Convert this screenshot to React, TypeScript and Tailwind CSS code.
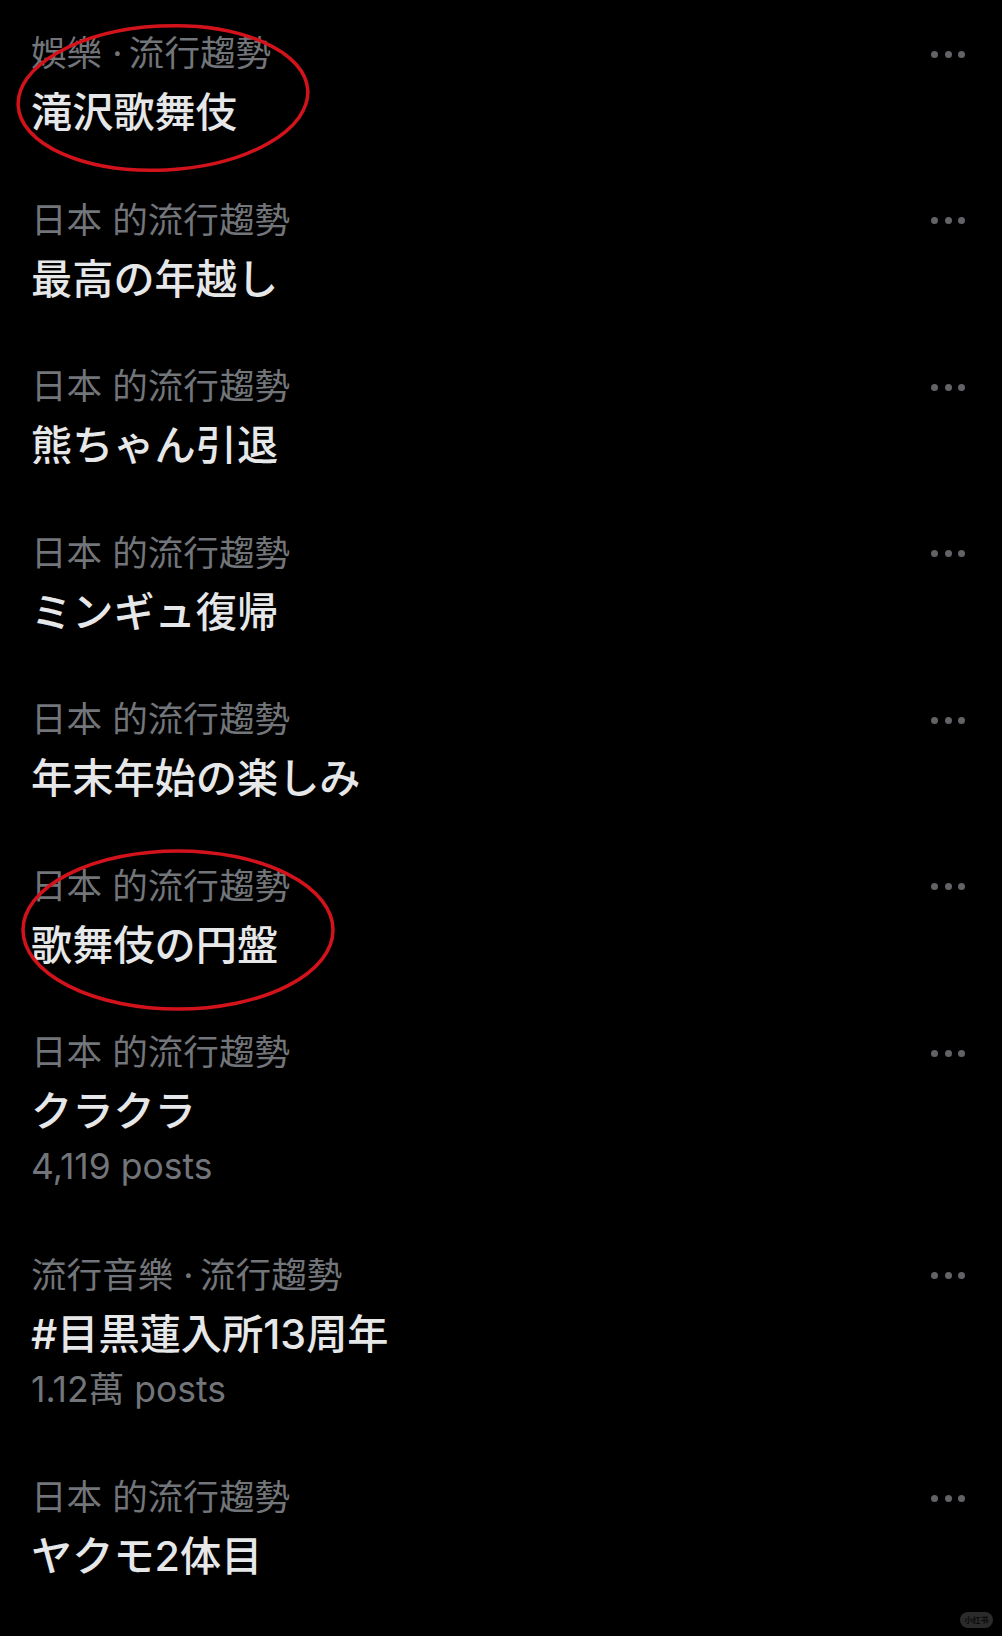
import React from "react";

type Trend = { cat: string; title: string; posts?: string };

const trends: Trend[] = [
  { cat: "娛樂 ·\u2009流行趨勢", title: "滝沢歌舞伎" },
  { cat: "日本 的流行趨勢", title: "最高の年越し" },
  { cat: "日本 的流行趨勢", title: "熊ちゃん引退" },
  { cat: "日本 的流行趨勢", title: "ミンギュ復帰" },
  { cat: "日本 的流行趨勢", title: "年末年始の楽しみ" },
  { cat: "日本 的流行趨勢", title: "歌舞伎の円盤" },
  { cat: "日本 的流行趨勢", title: "クラクラ", posts: "4,119 posts" },
  { cat: "流行音樂 ·\u2009流行趨勢", title: "#目黒蓮入所13周年", posts: "1.12萬 posts" },
  { cat: "日本 的流行趨勢", title: "ヤクモ2体目" },
];

function Dots() {
  return (
    <div className="flex h-[60px] items-center gap-[6.5px]">
      <span className="block h-[7px] w-[7px] rounded-full bg-[#626367]" />
      <span className="block h-[7px] w-[7px] rounded-full bg-[#626367]" />
      <span className="block h-[7px] w-[7px] rounded-full bg-[#626367]" />
    </div>
  );
}

function Row({ t }: { t: Trend }) {
  return (
    <div className="flex pl-[31px] pr-[37px] pt-[24px] pb-[26.5px]">
      <div className="flex flex-1 flex-col">
        <div className="text-[35.6px] leading-[60px] text-[#727579] font-['Inter','Noto_Sans_CJK_TC',sans-serif]">
          {t.cat}
        </div>
        <div className="text-[41.2px] leading-[56px] font-medium text-[#e6e7e8] font-['Inter','Noto_Sans_CJK_JP',sans-serif]">
          {t.title}
        </div>
        {t.posts && (
          <div className="text-[35.5px] leading-[56px] text-[#727579] font-['Inter','Noto_Sans_CJK_TC',sans-serif]">
            {t.posts}
          </div>
        )}
      </div>
      <Dots />
    </div>
  );
}

export default function App() {
  return (
    <div className="relative min-h-[1636px] w-full overflow-hidden bg-black">
      <div className="flex flex-col">
        {trends.map((t, i) => (
          <Row key={i} t={t} />
        ))}
      </div>
      <svg
        className="pointer-events-none absolute left-0 top-0"
        width="1002"
        height="1636"
        viewBox="0 0 1002 1636"
      >
        <ellipse
          cx="163"
          cy="98"
          rx="145"
          ry="72"
          transform="rotate(-3 163 98)"
          fill="none"
          stroke="#d3131b"
          strokeWidth="3.5"
        />
        <ellipse
          cx="178"
          cy="930"
          rx="155"
          ry="79"
          fill="none"
          stroke="#d3131b"
          strokeWidth="3.5"
        />
      </svg>
      <div className="absolute left-[960px] top-[1612px] flex h-[16px] w-[33px] items-center justify-center rounded-full bg-[#2b2b2b]">
        <span className="text-[8px] font-bold leading-none text-[#0b0b0b] font-['Noto_Sans_CJK_SC',sans-serif]">
          小红书
        </span>
      </div>
    </div>
  );
}
